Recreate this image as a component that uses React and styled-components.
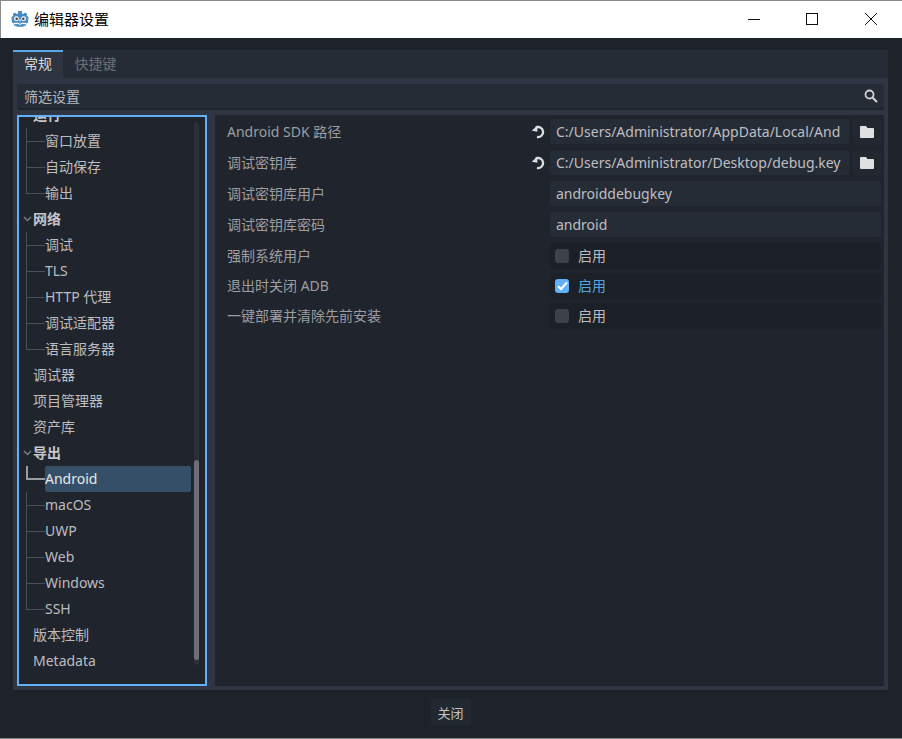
import React from 'react';
import styled, { createGlobalStyle } from 'styled-components';

const Global = createGlobalStyle`
  html, body { margin: 0; padding: 0; background: #1e2229; }
  * { box-sizing: border-box; }
  #root { width: 902px; height: 739px; overflow: hidden; }
`;

const Win = styled.div`
  width: 902px; height: 739px; display: flex; flex-direction: column;
  background: #1e2229; border-bottom: 1px solid #8a8a8a;
  font-family: "Noto Sans", "Noto Sans CJK SC", sans-serif; font-size: 14px; color: #c4c5c8;
`;
const TitleBar = styled.header`
  height: 38px; flex: none; background: #fff; display: flex; align-items: center;
  border-top: 1px solid #8a8a8a; border-left: 1px solid #8a8a8a; padding: 0 2px 2px 10px;
`;
const TitleText = styled.span`
  margin-left: 5px; font-family: "Noto Sans CJK SC", sans-serif; font-size: 15px; color: #000; flex: 1;
`;
const WinBtn = styled.div`
  width: 58.500px; height: 34px; display: flex; align-items: center; justify-content: center;
`;
const Body = styled.main`
  flex: 1; display: flex; flex-direction: column; padding: 12px 14px 0 13px; min-height: 0;
`;
const TabBar = styled.nav`
  height: 28px; flex: none; background: #262c36; display: flex; align-items: stretch;
`;
const Tab = styled.div`
  width: ${p => p.$active ? 50 : 65}px; display: flex; align-items: center; justify-content: center; padding-bottom: 5px;
  background: ${p => p.$active ? '#2e3440' : 'transparent'};
  border-top: 2px solid ${p => p.$active ? '#5aa7e8' : 'transparent'};
  color: ${p => p.$active ? '#d8d9db' : '#6b6f76'};
  font-size: 14px;
`;
const Panel = styled.section`
  height: 612px; flex: none; background: #2f3542; padding: 6px 4px 4px; display: flex; flex-direction: column; gap: 5px;
`;
const Filter = styled.div`
  height: 26px; flex: none; background: #262c36; border-bottom: 2px solid #1f232b; border-radius: 3px;
  display: flex; align-items: center; justify-content: space-between; padding: 0 6px 1px 7px; color: #b4b6ba;
`;
const Split = styled.div`
  flex: 1; min-height: 0; display: flex; gap: 8px;
`;
const Tree = styled.aside`
  width: 190px; flex: none; background: #20242c; border: 2px solid #62b1f8; overflow: hidden; display: flex;
`;
const TreeList = styled.div`
  flex: 1; margin-top: -15px; min-width: 0;
`;
const TreeRow = styled.div`
  height: 26px; display: flex; align-items: stretch; padding-left: ${p => p.$head ? 2 : 0}px;
  color: ${p => p.$strong ? '#c6c7ca' : '#bcbdc1'};
  font-weight: ${p => p.$strong ? 700 : 400};
`;
const Caret = styled.span`
  width: 12px; flex: none; display: flex; align-items: center; justify-content: center;
`;
const Link = styled.span`
  width: 19px; flex: none; margin-left: 7px;
  background:
    linear-gradient(${p => p.$on ? '#9a9ca0' : '#4b4f57'}, ${p => p.$on ? '#9a9ca0' : '#4b4f57'}) left top / ${p => p.$on ? 2 : 1}px ${p => p.$last || p.$on ? '50%' : '100%'} no-repeat,
    linear-gradient(${p => p.$on ? '#9a9ca0' : '#4b4f57'}, ${p => p.$on ? '#9a9ca0' : '#4b4f57'}) left 50% / 100% ${p => p.$on ? 2 : 1}px no-repeat;
`;
const Label = styled.span`
  display: flex; align-items: center; flex: 1; padding-bottom: 2px;
  white-space: nowrap; border-radius: 2px;
  background: ${p => p.$sel ? '#364f68' : 'transparent'};
  color: ${p => p.$sel ? '#e6e8ea' : 'inherit'};
  margin-right: ${p => p.$sel ? '3px' : 0};
`;
const ScrollTrack = styled.div`
  width: 5px; flex: none; margin: 5px 6px 19px 0; background: #2a2f39; border-radius: 3px; display: flex; align-items: flex-end; padding-bottom: 5px;
`;
const ScrollThumb = styled.div`
  width: 5px; height: 200px; background: #6b6e74; border-radius: 3px;
`;
const Inspector = styled.div`
  flex: 1; background: #20242c; padding: 4px 3px 0 12px; display: flex; flex-direction: column;
`;
const Row = styled.div`
  display: grid; grid-template-columns: 1fr 331px; height: 26px; flex: none; margin-bottom: ${p => p.$mb ?? 5}px;
`;
const PropName = styled.div`
  display: flex; align-items: center; justify-content: space-between; color: #9c9ea2; padding: 0 3px 2px 0;
`;
const Value = styled.div`
  display: flex; gap: 4px; min-width: 0;
`;
const Field = styled.div`
  flex: 1; min-width: 0; background: #262c36; border-bottom: 1px solid #1f232b; border-radius: 3px; padding: 0 6px 1px;
  display: flex; align-items: center; overflow: hidden; white-space: nowrap; color: #bebfc3;
`;
const IconBtn = styled.div`
  width: 28px; flex: none; background: #232830; border-radius: 3px; display: flex; align-items: center; justify-content: center;
`;
const CheckRow = styled.div`
  flex: 1; background: #1c2027; border-radius: 3px; display: flex; align-items: center; padding: 0 5px; gap: 9px;
  color: ${p => p.$on ? '#56a4e4' : '#bcbdc1'};
`;
const CheckText = styled.span`
  padding-bottom: 2px;
`;
const Box = styled.span`
  width: 14px; height: 14px; border-radius: 3px; flex: none; display: flex; align-items: center; justify-content: center;
  background: ${p => p.$on ? '#62b1f8' : '#3e4148'};
`;
const Footer = styled.footer`
  flex: 1; display: flex; justify-content: center; padding-top: 8px;
`;
const CloseBtn = styled.button`
  width: 40px; height: 28px; border: 0; border-radius: 3px; background: #222830; color: #c4c5c8; padding: 0;
  font: 400 13px "Noto Sans", "Noto Sans CJK SC", sans-serif;
`;

const GodotLogo = () => (
  <svg width="18" height="18" viewBox="0.500 1.300 17 16">
    <path fill="#478cbf" d="M1 7.500 2.600 6.300 2.400 4.200 4.600 3.300 5.600 4.600 7 4.200 7.300 1.800 10.700 1.800 11 4.200 12.400 4.600 13.400 3.300 15.600 4.200 15.400 6.300 17 7.500 16.600 12.500 15 13.200 14.500 15.500 11.500 16.600H6.500L3.500 15.500 3 13.200 1.400 12.500Z" />
    <circle cx="5.600" cy="9" r="2.300" fill="#fff" />
    <circle cx="12.400" cy="9" r="2.300" fill="#fff" />
    <circle cx="5.800" cy="9.100" r="1.200" fill="#414042" />
    <circle cx="12.200" cy="9.100" r="1.200" fill="#414042" />
    <path d="M3.500 13c1 1.400 2.200.2 2.800.2S7.800 14.200 9 14.200s2-1 2.700-1 1.800 1.200 2.800-.2" fill="none" stroke="#fff" strokeWidth="1.200" />
    <rect x="8.400" y="9.600" width="1.200" height="2" fill="#fff" />
  </svg>
);
const Minimize = () => <svg width="12" height="12"><path d="M0 6.500H12" stroke="#111" /></svg>;
const Maximize = () => <svg width="12" height="12"><rect x=".5" y=".5" width="11" height="11" fill="none" stroke="#111" /></svg>;
const CloseX = () => <svg width="12" height="12"><path d="M0 0 12 12M12 0 0 12" stroke="#111" /></svg>;
const Search = () => (
  <svg width="14" height="14" viewBox="0 0 14 14"><circle cx="5.500" cy="5.500" r="4" fill="none" stroke="#cfd0d2" strokeWidth="1.800" /><path d="M8.500 8.500 13 13" stroke="#cfd0d2" strokeWidth="2.200" /></svg>
);
const Revert = () => (
  <svg width="16" height="15" viewBox="0 0 16 15"><path d="M4.800 3.600A5 5 0 1 1 6 12.900" fill="none" stroke="#dcdddf" strokeWidth="2.300" /><path d="M0.800 6.800 6.400 1.200V7.800Z" fill="#dcdddf" /></svg>
);
const Folder = () => (
  <svg width="14" height="12" viewBox="0 0 14 12"><path d="M1 0H6L7.500 2H13a1 1 0 0 1 1 1V11a1 1 0 0 1-1 1H1a1 1 0 0 1-1-1V1a1 1 0 0 1 1-1Z" fill="#e0e0e0" /></svg>
);
const Check = () => (
  <svg width="11" height="10" viewBox="0 0 11 10"><path d="M1 5.200 4 8 10 1.500" fill="none" stroke="#fff" strokeWidth="2.200" /></svg>
);
const Chevron = () => (
  <svg width="9" height="6" viewBox="0 0 9 6"><path d="M1 1 4.500 4.500 8 1" fill="none" stroke="#777a80" strokeWidth="1.500" /></svg>
);

const tree = [
  { t: '运行', head: true, open: true },
  { t: '窗口放置', child: true }, { t: '自动保存', child: true }, { t: '输出', child: true, last: true },
  { t: '网络', head: true, open: true },
  { t: '调试', child: true }, { t: 'TLS', child: true }, { t: 'HTTP 代理', child: true }, { t: '调试适配器', child: true }, { t: '语言服务器', child: true, last: true },
  { t: '调试器', head: true }, { t: '项目管理器', head: true }, { t: '资产库', head: true },
  { t: '导出', head: true, open: true },
  { t: 'Android', child: true, sel: true }, { t: 'macOS', child: true }, { t: 'UWP', child: true }, { t: 'Web', child: true }, { t: 'Windows', child: true }, { t: 'SSH', child: true, last: true },
  { t: '版本控制', head: true }, { t: 'Metadata', head: true },
];

const pathRows = [
  ['Android SDK 路径', 'C:/Users/Administrator/AppData/Local/And'],
  ['调试密钥库', 'C:/Users/Administrator/Desktop/debug.key'],
];
const textRows = [['调试密钥库用户', 'androiddebugkey'], ['调试密钥库密码', 'android']];
const checkRows = [['强制系统用户', false], ['退出时关闭 ADB', true], ['一键部署并清除先前安装', false]];

export default function App() {
  return (
    <Win>
      <Global />
      <TitleBar>
        <GodotLogo />
        <TitleText>编辑器设置</TitleText>
        <WinBtn><Minimize /></WinBtn>
        <WinBtn><Maximize /></WinBtn>
        <WinBtn><CloseX /></WinBtn>
      </TitleBar>
      <Body>
        <TabBar>
          <Tab $active>常规</Tab>
          <Tab>快捷键</Tab>
        </TabBar>
        <Panel>
          <Filter>筛选设置<Search /></Filter>
          <Split>
            <Tree>
              <TreeList>
                {tree.map(n => (
                  <TreeRow key={n.t} $head={n.head} $strong={n.open}>
                    {n.head && <Caret>{n.open && <Chevron />}</Caret>}
                    {n.child && <Link $last={n.last} $on={n.sel} />}
                    <Label $sel={n.sel}>{n.t}</Label>
                  </TreeRow>
                ))}
              </TreeList>
              <ScrollTrack><ScrollThumb /></ScrollTrack>
            </Tree>
            <Inspector>
              {pathRows.map(([k, v]) => (
                <Row key={k}>
                  <PropName>{k}<Revert /></PropName>
                  <Value>
                    <Field>{v}</Field>
                    <IconBtn><Folder /></IconBtn>
                  </Value>
                </Row>
              ))}
              {textRows.map(([k, v]) => (
                <Row key={k}>
                  <PropName>{k}</PropName>
                  <Value><Field>{v}</Field></Value>
                </Row>
              ))}
              {checkRows.map(([k, on]) => (
                <Row key={k} $mb={4}>
                  <PropName>{k}</PropName>
                  <Value>
                    <CheckRow $on={on}>
                      <Box $on={on}>{on && <Check />}</Box>
                      <CheckText>启用</CheckText>
                    </CheckRow>
                  </Value>
                </Row>
              ))}
            </Inspector>
          </Split>
        </Panel>
        <Footer><CloseBtn>关闭</CloseBtn></Footer>
      </Body>
    </Win>
  );
}
